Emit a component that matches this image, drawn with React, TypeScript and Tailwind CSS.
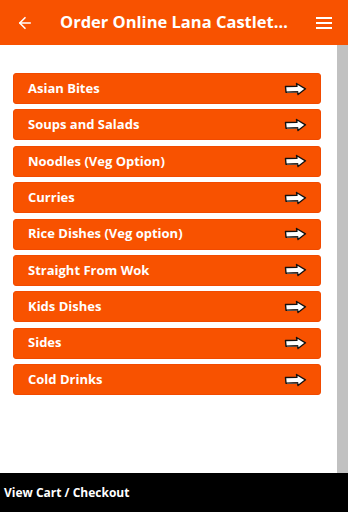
import { ArrowLeft } from 'lucide-react';

const categories = [
  'Asian Bites',
  'Soups and Salads',
  'Noodles (Veg Option)',
  'Curries',
  'Rice Dishes (Veg option)',
  'Straight From Wok',
  'Kids Dishes',
  'Sides',
  'Cold Drinks',
];

function PointArrow() {
  return (
    <svg width="23" height="14" viewBox="0 0 23 14" className="shrink-0">
      <path
        d="M1.5 4.5 L13 4.2 L12.5 1.5 L21.5 6.8 L14 12.5 L13.6 9.6 L2 10.2 Z"
        fill="#ffffff"
        stroke="#111111"
        strokeWidth="1.4"
        strokeLinejoin="round"
      />
      <path d="M3 10.6 L13.8 10.1" stroke="#555" strokeWidth="1" />
    </svg>
  );
}

export default function App() {
  return (
    <div className="flex h-[512px] w-[348px] flex-col bg-white font-['Open_Sans',sans-serif]">
      <header className="flex h-[45px] shrink-0 items-center bg-[#f85200] px-4 text-white">
        <ArrowLeft size={18} strokeWidth={2.2} />
        <h1 className="ml-[26px] w-[234px] truncate text-[16.5px] font-bold">
          Order Online Lana Castletroy
        </h1>
        <div className="ml-auto flex flex-col gap-[3px]">
          <span className="block h-[2px] w-[16px] bg-white" />
          <span className="block h-[2px] w-[16px] bg-white" />
          <span className="block h-[2px] w-[16px] bg-white" />
        </div>
      </header>
      <div className="flex min-h-0 flex-1">
        <main className="flex-1 pl-[13px] pr-[16px] pt-[28px]">
          <ul className="flex flex-col gap-[5.4px]">
            {categories.map((name) => (
              <li
                key={name}
                className="flex h-[31px] items-center justify-between rounded-[3px] border border-[#f14a00] bg-[#f85200] pl-[14px] pr-[13px] text-[13px] font-bold text-white"
              >
                <span>{name}</span>
                <PointArrow />
              </li>
            ))}
          </ul>
        </main>
        <div className="w-[11px] bg-[#c1c1c1]" />
      </div>
      <footer className="flex h-[39px] shrink-0 items-center bg-black px-[4px] text-[12px] font-bold text-white">
        View Cart / Checkout
      </footer>
    </div>
  );
}
